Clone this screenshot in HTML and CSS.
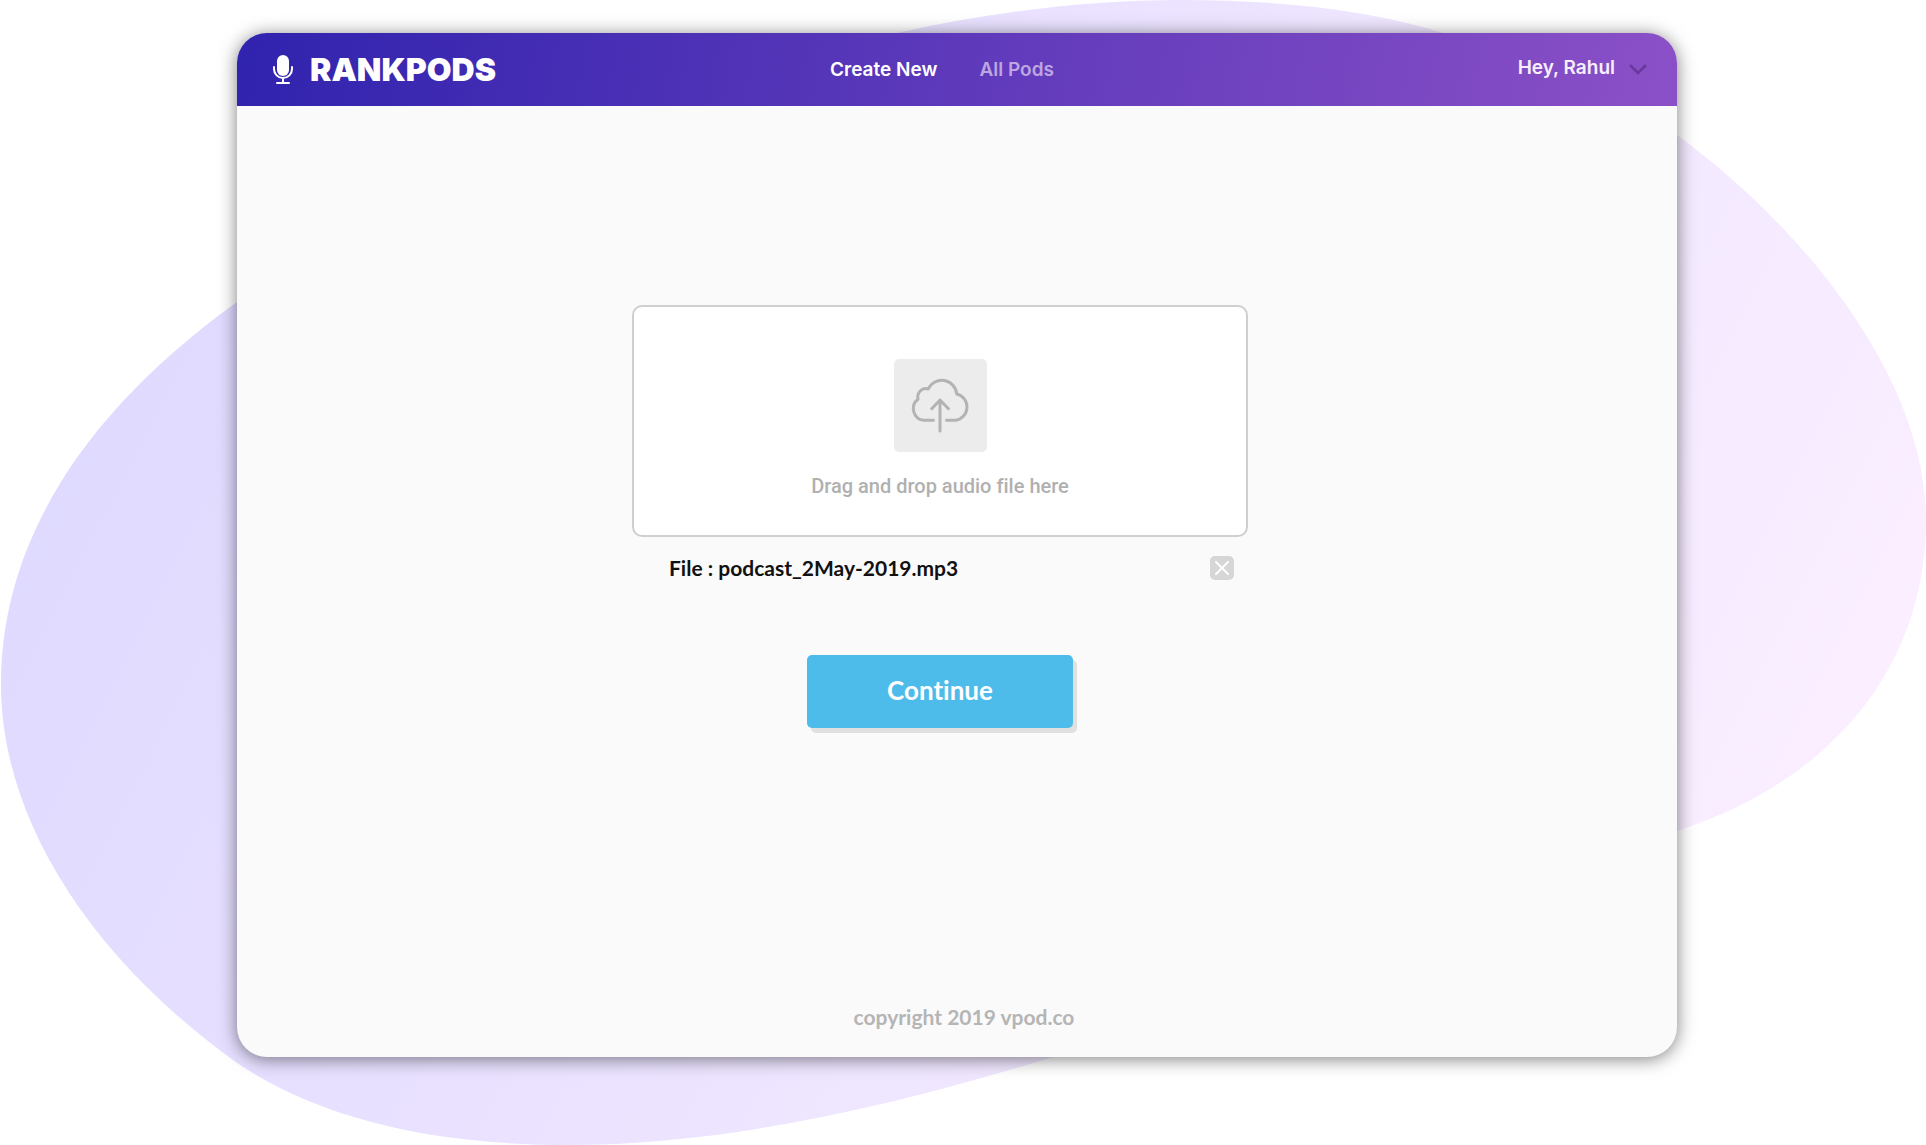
FILE: index.html
```html
<!DOCTYPE html>
<html lang="en">
<head>
<meta charset="utf-8">
<meta name="viewport" content="width=device-width, initial-scale=1">
<title>RankPods – Create New</title>
<link rel="stylesheet" href="styles.css">
</head>
<body>
<div class="stage">
  <svg class="blob" viewBox="0 0 1926 1145" preserveAspectRatio="none" aria-hidden="true">
    <defs>
      <linearGradient id="blob-fill" x1="0" y1="0.35" x2="1" y2="0.65">
        <stop offset="0" stop-color="#ded9ff"/>
        <stop offset="1" stop-color="#fbefff"/>
      </linearGradient>
    </defs>
    <path fill="url(#blob-fill)" d="M1180 0C1280 0 1370 10 1443 33C1530 60 1610 92 1677 135C1800 225 1926 375 1926 520C1926 660 1840 778 1677 831L1056 1056C890 1108 720 1145 569 1145C440 1145 325 1122 237 1063C80 950 1 810 1 685C1 545 80 415 237 302C430 170 650 90 897 33C990 12 1090 0 1180 0Z"/>
  </svg>
  <div class="card">
    <header class="topbar">
      <a class="brand" href="#">
        <svg class="brand-icon" viewBox="0 0 22 30" aria-hidden="true">
          <rect x="5" y="0" width="12" height="21" rx="6" fill="#fff"/>
          <path d="M2 12v2a9 9 0 0 0 18 0v-2M11 23v4M5 28h12" fill="none" stroke="#fff" stroke-width="2" stroke-linecap="round"/>
        </svg>
        <span>RANKPODS</span>
      </a>
      <nav class="nav">
        <a class="nav-link active" href="#" aria-current="page">Create New</a>
        <a class="nav-link" href="#">All Pods</a>
      </nav>
      <button class="user" type="button">
        Hey, Rahul
        <svg class="chevron" viewBox="0 0 18 12" aria-hidden="true">
          <path d="M1 1l8 8 8-8" fill="none" stroke="#68389a" stroke-width="2.5"/>
        </svg>
      </button>
    </header>
    <main class="content">
      <label class="dropzone">
        <input class="file-input" type="file" accept="audio/*">
        <svg class="upload" viewBox="0 0 93 93" aria-hidden="true">
          <g fill="none" stroke="#b3b3b3" stroke-width="3" stroke-linecap="round" stroke-linejoin="round">
            <path d="M39.5 61.3H30A11.7 11.7 0 0 1 24 40.3C22.5 34 28 28 34.3 30A14.9 14.9 0 0 1 62.7 35A13.4 13.4 0 0 1 61.5 61.3H52.5"/>
            <path d="M46 72V41M37.7 49.7L46 41L54.5 49.7"/>
          </g>
        </svg>
        <span class="drop-text">Drag and drop audio file here</span>
      </label>
      <div class="file-row">
        <span>File : podcast_2May-2019.mp3</span>
        <button class="remove" type="button" aria-label="Remove file">
          <svg viewBox="0 0 24 24" aria-hidden="true">
            <path d="M6 6l12 12M18 6L6 18" stroke="#fff" stroke-width="2" stroke-linecap="round"/>
          </svg>
        </button>
      </div>
      <button class="continue" type="button">Continue</button>
    </main>
    <footer class="footer">copyright 2019 vpod.co</footer>
  </div>
</div>
</body>
</html>
```
FILE: styles.css
```css
* {
  box-sizing: border-box;
}

body {
  margin: 0;
  background: #fff;
  font-family: Lato, "Open Sans", sans-serif;
  font-weight: 700;
  font-variant-ligatures: none;
}

button {
  border: 0;
  padding: 0;
  font: inherit;
  font-variant-ligatures: none;
  cursor: pointer;
}

a {
  color: inherit;
  text-decoration: none;
}

.stage {
  position: relative;
  display: flex;
  min-height: 100vh;
  padding: 33px 249px 88px 237px;
}

/* Decorative backdrop behind the card */
.blob {
  position: absolute;
  inset: 0;
  width: 100%;
  height: 100%;
}

.card {
  position: relative;
  display: flex;
  flex: 1;
  flex-direction: column;
  min-width: 0;
  overflow: hidden;
  border-radius: 30px;
  background: #fafafa;
  box-shadow: 0 2px 18px rgba(0, 0, 0, 0.5);
}

.topbar {
  display: grid;
  grid-template-columns: 1fr auto 1fr;
  align-items: center;
  min-height: 73px;
  padding: 0 30px 0 0;
  background: linear-gradient(100deg, #3023ae 0%, #8b50c7 100%);
  color: #fff;
}

.brand {
  display: flex;
  align-items: center;
  gap: 16px;
  padding-left: 35px;
  font-family: Inter, sans-serif;
  font-size: 32px;
  font-weight: 900;
  line-height: 36px;
}

.brand-icon {
  width: 22px;
  height: 30px;
}

.nav {
  display: flex;
  gap: 42px;
}

.nav-link,
.user {
  font-family: Inter, sans-serif;
  font-size: 19px;
  font-weight: 600;
  line-height: 24px;
}

.nav-link {
  color: #bda6e2;
}

.nav-link.active {
  color: #fff;
}

.user {
  display: flex;
  align-items: center;
  justify-self: end;
  gap: 14px;
  padding-bottom: 4px;
  background: none;
  color: #f7f0fc;
}

.chevron {
  width: 18px;
  height: 12px;
  margin-top: 4px;
}

.content {
  display: flex;
  flex: 1;
  flex-direction: column;
  align-items: center;
  padding: 199px 34px 40px 0;
}

.dropzone {
  display: flex;
  flex-direction: column;
  align-items: center;
  gap: 20px;
  width: 100%;
  max-width: 616px;
  min-height: 232px;
  padding-top: 52px;
  border: 2px solid #cfcfcf;
  border-radius: 10px;
  background: #fff;
  cursor: pointer;
}

.file-input {
  position: absolute;
  width: 1px;
  height: 1px;
  opacity: 0;
}

.upload {
  width: 93px;
  height: 93px;
  border-radius: 5px;
  background: #ececec;
}

.drop-text {
  color: #b0b0b0;
  font-family: Roboto, sans-serif;
  font-size: 20px;
  font-weight: 500;
  line-height: 28px;
}

.file-row {
  display: flex;
  align-items: center;
  justify-content: space-between;
  width: 100%;
  max-width: 616px;
  padding: 18px 14px 0 37px;
  color: #111;
  font-size: 21px;
  line-height: 26px;
}

.remove {
  width: 24px;
  height: 24px;
  border-radius: 5px;
  background: #d6d6d6;
}

.remove svg {
  display: block;
}

.continue {
  width: 266px;
  height: 73px;
  margin-top: 74px;
  padding-bottom: 4px;
  border-radius: 5px;
  background: #4dbceb;
  box-shadow: 4px 5px 0 #e0e0e0;
  color: #fff;
  font-size: 26px;
}

.footer {
  padding: 0 0 26px 14px;
  color: #b5b5b5;
  font-size: 21px;
  line-height: 28px;
  text-align: center;
}

@media (max-width: 1200px) {
  .stage {
    padding: 32px;
  }

  .content {
    padding-right: 16px;
    padding-left: 16px;
  }
}
```
